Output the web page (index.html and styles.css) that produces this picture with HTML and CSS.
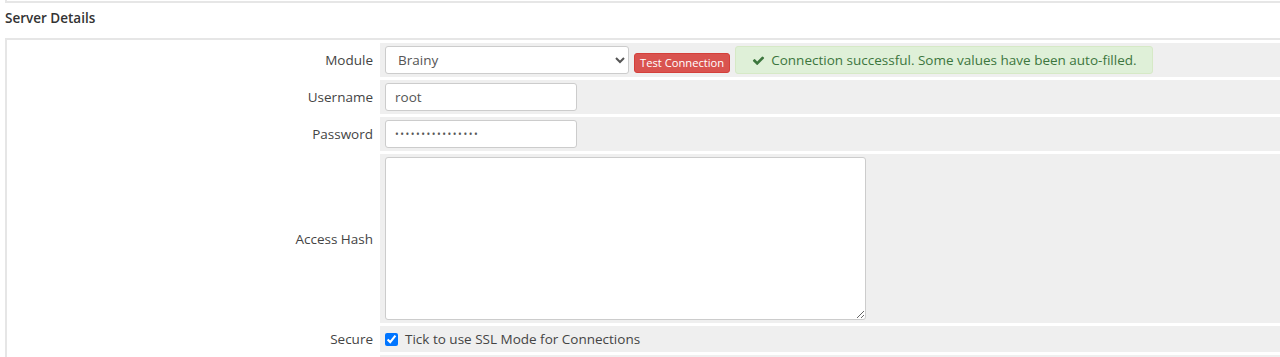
FILE: index.html
```html
<!DOCTYPE html>
<html>
<head>
<meta charset="utf-8">
<link rel="stylesheet" href="styles.css">
</head>
<body>
<div class="prev-panel"></div>
<h2 class="section-title">Server Details</h2>
<div class="form-box">
  <div class="label">Module</div>
  <div class="field field-module">
    <select class="select"><option>Brainy</option></select>
    <button class="btn-danger">Test Connection</button>
    <div class="alert-success">
      <svg class="check" viewBox="0 0 1792 1792" width="13" height="13"><path fill="#3c763d" d="M1671 566q0 40-28 68l-724 724-136 136q-28 28-68 28t-68-28l-136-136-362-362q-28-28-28-68t28-68l136-136q28-28 68-28t68 28l294 295 656-657q28-28 68-28t68 28l136 136q28 28 28 68z"/></svg>
      <span>Connection successful. Some values have been auto-filled.</span>
    </div>
  </div>
  <div class="label">Username</div>
  <div class="field"><input class="input" type="text" value="root"></div>
  <div class="label">Password</div>
  <div class="field"><input class="input pw" type="password" value="xxxxxxxxxxxxxxxx"></div>
  <div class="label">Access Hash</div>
  <div class="field"><textarea class="textarea"></textarea></div>
  <div class="label">Secure</div>
  <div class="field field-check"><label class="check-label"><input type="checkbox" checked class="checkbox"> Tick to use SSL Mode for Connections</label></div>
  <div class="label"></div>
  <div class="field"><input class="input small" type="text"></div>
</div>
</body>
</html>
```
FILE: styles.css
```css
html, body {
  margin: 0;
  padding: 0;
  overflow: hidden;
  background: #fff;
}
body {
  font-family: "Open Sans", "DejaVu Sans", sans-serif;
  font-size: 13.5px;
  color: #333;
}
.prev-panel {
  margin: -21px -20px 0 5px;
  height: 20px;
  border: 2px solid #e6e6e6;
}
.section-title {
  margin: 6px 0 11px 5px;
  font-size: 13.5px;
  line-height: 18px;
  font-weight: 600;
  color: #333;
}
.form-box {
  margin: 0 -20px 0 5px;
  border: 2px solid #e6e6e6;
  border-bottom: none;
  display: grid;
  grid-template-columns: 368px 1fr;
  column-gap: 2px;
  row-gap: 3px;
  padding: 3px 0 0 3px;
}
.label {
  display: flex;
  align-items: center;
  justify-content: flex-end;
  padding-right: 5px;
  color: #444;
  font-size: 13.5px;
}
.field {
  background: #efefef;
  padding: 3px 5px;
  display: flex;
  align-items: center;
}
.field-module {
  gap: 5px;
}
.select {
  width: 244px;
  height: 28px;
  border: 1px solid #ccc;
  border-radius: 3px;
  background: #fff;
  font-family: "Open Sans", sans-serif;
  font-size: 13.5px;
  color: #555;
  padding: 0 8px;
}
.btn-danger {
  margin-top: 5px;
  height: 20px;
  padding: 0 5px;
  border: 1px solid #d43f3a;
  border-radius: 3px;
  background: #d9534f;
  color: #fff;
  font-family: "Open Sans", sans-serif;
  font-size: 11.2px;
  line-height: 18px;
}
.alert-success {
  display: flex;
  align-items: center;
  gap: 6px;
  height: 28px;
  box-sizing: border-box;
  padding: 0 15px 0 16px;
  background: #dff0d8;
  border: 1px solid #d6e9c6;
  border-radius: 3px;
  color: #3c763d;
  font-size: 13.5px;
}
.check {
  display: block;
}
.input {
  width: 192px;
  height: 28px;
  box-sizing: border-box;
  border: 1px solid #ccc;
  border-radius: 3px;
  padding: 0 9px;
  font-family: "Open Sans", sans-serif;
  font-size: 13.5px;
  color: #555;
  background: #fff;
}
.input.pw {
  font-size: 10px;
  letter-spacing: 1.5px;
}
.input.small {
  width: 74px;
}
.textarea {
  width: 481px;
  height: 163px;
  box-sizing: border-box;
  border: 1px solid #ccc;
  border-radius: 3px;
  background: #fff;
  margin: 0;
  display: block;
}
.field-check {
  height: 20px;
}
.check-label {
  display: flex;
  align-items: center;
  color: #444;
  font-size: 13.5px;
}
.checkbox {
  width: 13px;
  height: 13px;
  margin: 0 7px 0 0;
}
```
